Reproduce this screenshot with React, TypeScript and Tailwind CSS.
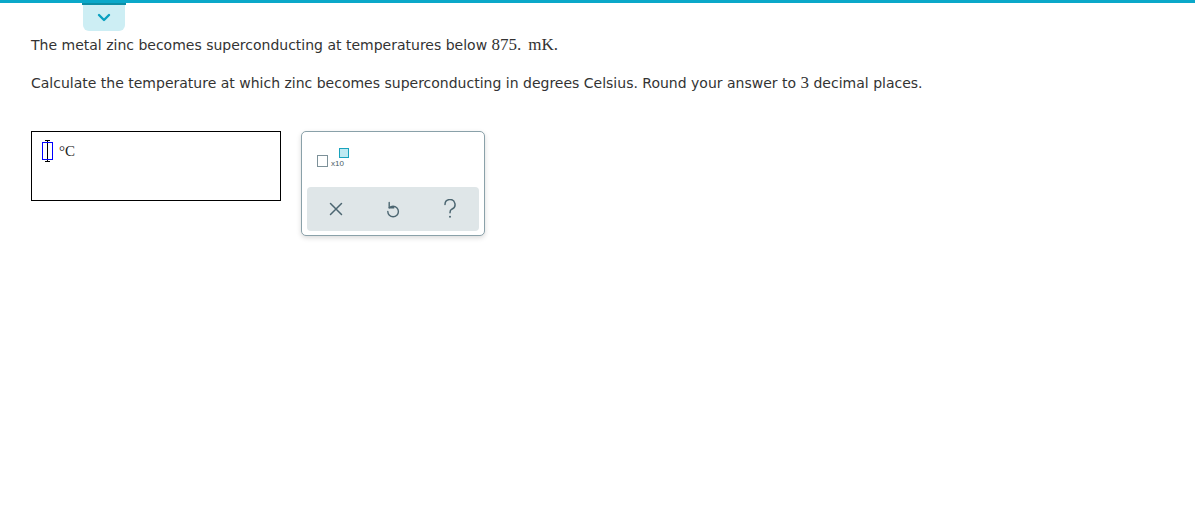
import React from "react";

const serif = { fontFamily: '"Liberation Serif", "Times New Roman", serif' };

export default function App() {
  return (
    <div className="relative w-[1195px] h-[520px] bg-white overflow-hidden" style={{ fontFamily: '"DejaVu Sans", Verdana, sans-serif' }}>
      <div className="h-[3px] w-full bg-[#0aa8c9]" />
      <div className="absolute left-[83px] top-[3px] w-[42px] h-[28px] bg-[#cdeef4] rounded-b-[6px] flex items-center justify-center">
        <div className="absolute left-[-1px] right-[-1px] top-0 h-[2px] bg-[#0b8ea6]" />
        <svg width="14" height="9" viewBox="0 0 14 9">
          <path d="M2 2 L7 7 L12 2" fill="none" stroke="#0aa0c0" strokeWidth="2.4" strokeLinecap="round" strokeLinejoin="round" />
        </svg>
      </div>
      <div className="pl-[31px] pt-[32px] text-[14px] text-[#333]">
        <p className="h-[20px] leading-[20px]">
          The metal zinc becomes superconducting at temperatures below{" "}
          <span className="text-[17px]" style={serif}>875.</span>
          <span className="text-[17px] ml-[7px]" style={serif}>mK.</span>
        </p>
        <p className="mt-[18px] h-[20px] leading-[20px]">
          Calculate the temperature at which zinc becomes superconducting in degrees Celsius. Round your answer to{" "}
          <span className="text-[17px]" style={serif}>3</span> decimal places.
        </p>
        <div className="mt-[38px] flex gap-[20px] items-start">
          <div className="w-[250px] h-[70px] border border-black flex items-start gap-[6px] pl-[10px] pt-[8px]">
            <div className="relative w-[11px] h-[22px] flex justify-center">
              <div className="absolute left-0 top-[2px] w-[11px] h-[18px] border border-[#0000ff]" />
              <div className="w-px h-[22px] bg-black" />
              <div className="absolute left-[3px] top-0 w-[5px] h-px bg-black" />
              <div className="absolute left-[3px] bottom-0 w-[5px] h-px bg-black" />
            </div>
            <span className="mt-[3px] text-[15px] leading-[16px] text-[#222]" style={serif}>°C</span>
          </div>
          <div className="w-[184px] h-[105px] border border-[#8aa1a9] rounded-[5px] bg-white shadow-[0_2px_5px_rgba(0,0,0,0.15)] px-[5px] pt-[15px] flex flex-col">
            <div className="h-[40px] flex items-start pl-[10px] text-[#4a5d66]">
              <div className="mt-[8px] w-[11px] h-[12px] border-[1.5px] border-[#7d9199]" />
              <span className="mt-[12px] ml-[3px] text-[8px] leading-[10px]" style={{ fontFamily: '"Liberation Sans", Arial, sans-serif' }}>x10</span>
              <div className="mt-[1px] ml-[-5px] w-[10px] h-[10px] border-[1.5px] border-[#1aa3bd] bg-[#bfeaf2]" />
            </div>
            <div className="h-[44px] bg-[#dfe6e8] rounded-[4px] grid grid-cols-3 items-center justify-items-center">
              <svg width="14" height="14" viewBox="0 0 14 14">
                <path d="M1.5 1.5 L12.5 12.5 M12.5 1.5 L1.5 12.5" stroke="#4c6671" strokeWidth="1.5" strokeLinecap="round" />
              </svg>
              <svg width="14" height="18" viewBox="0 0 14 18">
                <path d="M1.8 11.5 A5.3 5.3 0 1 0 7 6.2 C5.6 6.2 4.3 6.8 3.2 7.8" fill="none" stroke="#4c6671" strokeWidth="1.4" strokeLinecap="round" strokeLinejoin="round" />
                <path d="M3.2 2.5 V7.8 H7.8" fill="none" stroke="#4c6671" strokeWidth="1.4" strokeLinecap="round" strokeLinejoin="round" />
              </svg>
              <svg width="14" height="20" viewBox="0 0 14 20">
                <path d="M2 5.5 A5 5 0 1 1 8.8 10.2 C7.4 10.9 7 11.8 7 13.8" fill="none" stroke="#4c6671" strokeWidth="1.5" strokeLinecap="round" />
                <circle cx="7" cy="17.8" r="1" fill="#4c6671" />
              </svg>
            </div>
          </div>
        </div>
      </div>
    </div>
  );
}
